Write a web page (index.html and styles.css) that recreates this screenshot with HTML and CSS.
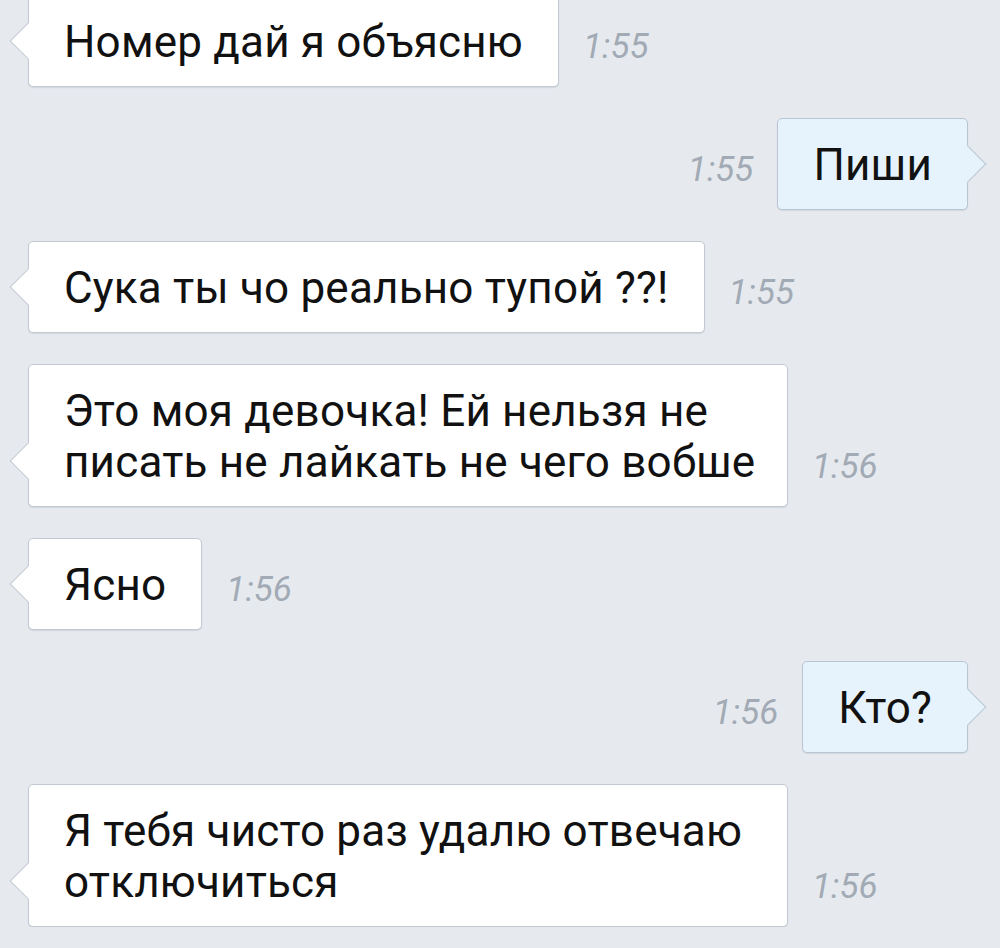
FILE: index.html
```html
<!DOCTYPE html>
<html lang="ru">

<head>
  <meta charset="UTF-8">
  <meta name="viewport" content="width=device-width, initial-scale=1.0">

  <title>Диалог</title>
  <link rel="stylesheet" href="styles.css">
</head>

<body>
  <div class="chat">
    <div class="row in">
      <div class="bubble">Номер дай я объясню</div>
      <span class="time">1:55</span>
    </div>
    <div class="row out">
      <span class="time">1:55</span>
      <div class="bubble">Пиши</div>
    </div>
    <div class="row in">
      <div class="bubble">Сука ты чо реально тупой ??!</div>
      <span class="time">1:55</span>
    </div>
    <div class="row in">
      <div class="bubble wide">Это моя девочка! Ей нельзя не писать не лайкать не чего вобше</div>
      <span class="time">1:56</span>
    </div>
    <div class="row in">
      <div class="bubble">Ясно</div>
      <span class="time">1:56</span>
    </div>
    <div class="row out">
      <span class="time">1:56</span>
      <div class="bubble">Кто?</div>
    </div>
    <div class="row in">
      <div class="bubble wide">Я тебя чисто раз удалю отвечаю отключиться</div>
      <span class="time">1:56</span>
    </div>
  </div>
</body>

</html>
```

FILE: styles.css
```css
body {
  margin: 0;
  background-color: #e6eaef;
  font-family: Roboto, "Noto Sans", sans-serif;
  overflow: hidden;
}

.chat {
  display: flex;
  flex-direction: column;
  gap: 31px;
  margin-top: -5px;
  padding: 0 32px 0 28px;
}

.row {
  display: flex;
  align-items: flex-end;
  gap: 24px;
}

.row.out {
  justify-content: flex-end;
  gap: 24px;
}

.bubble {
  position: relative;
  box-sizing: border-box;
  max-width: 760px;
  padding: 21px 35px 18px 35px;
  background-color: #fff;
  border: 1px solid #c2c9d2;
  border-radius: 5px;
  box-shadow: 0 1px 1px rgba(60, 70, 90, 0.12);
  color: #111;
  font-size: 44px;
  letter-spacing: 0.2px;
  line-height: 51px;
}

.bubble.wide {
  width: 760px;
  padding-right: 12px;
}

/* little arrow on the side of the bubble */
.bubble::before {
  content: "";
  position: absolute;
  bottom: 32px;
  width: 25px;
  height: 25px;
  background-color: inherit;
  transform: rotate(45deg);
}

.in .bubble::before {
  left: -14px;
  border-left: 1px solid #c2c9d2;
  border-bottom: 1px solid #c2c9d2;
}

.out .bubble {
  background-color: #e7f3fc;
  border-color: #b8c6d4;
}

.out .bubble::before {
  right: -14px;
  border-top: 1px solid #b8c6d4;
  border-right: 1px solid #b8c6d4;
}

.time {
  margin-bottom: 20px;
  color: #a2aab5;
  font-size: 35px;
  font-style: italic;
  line-height: 40px;
}
```
